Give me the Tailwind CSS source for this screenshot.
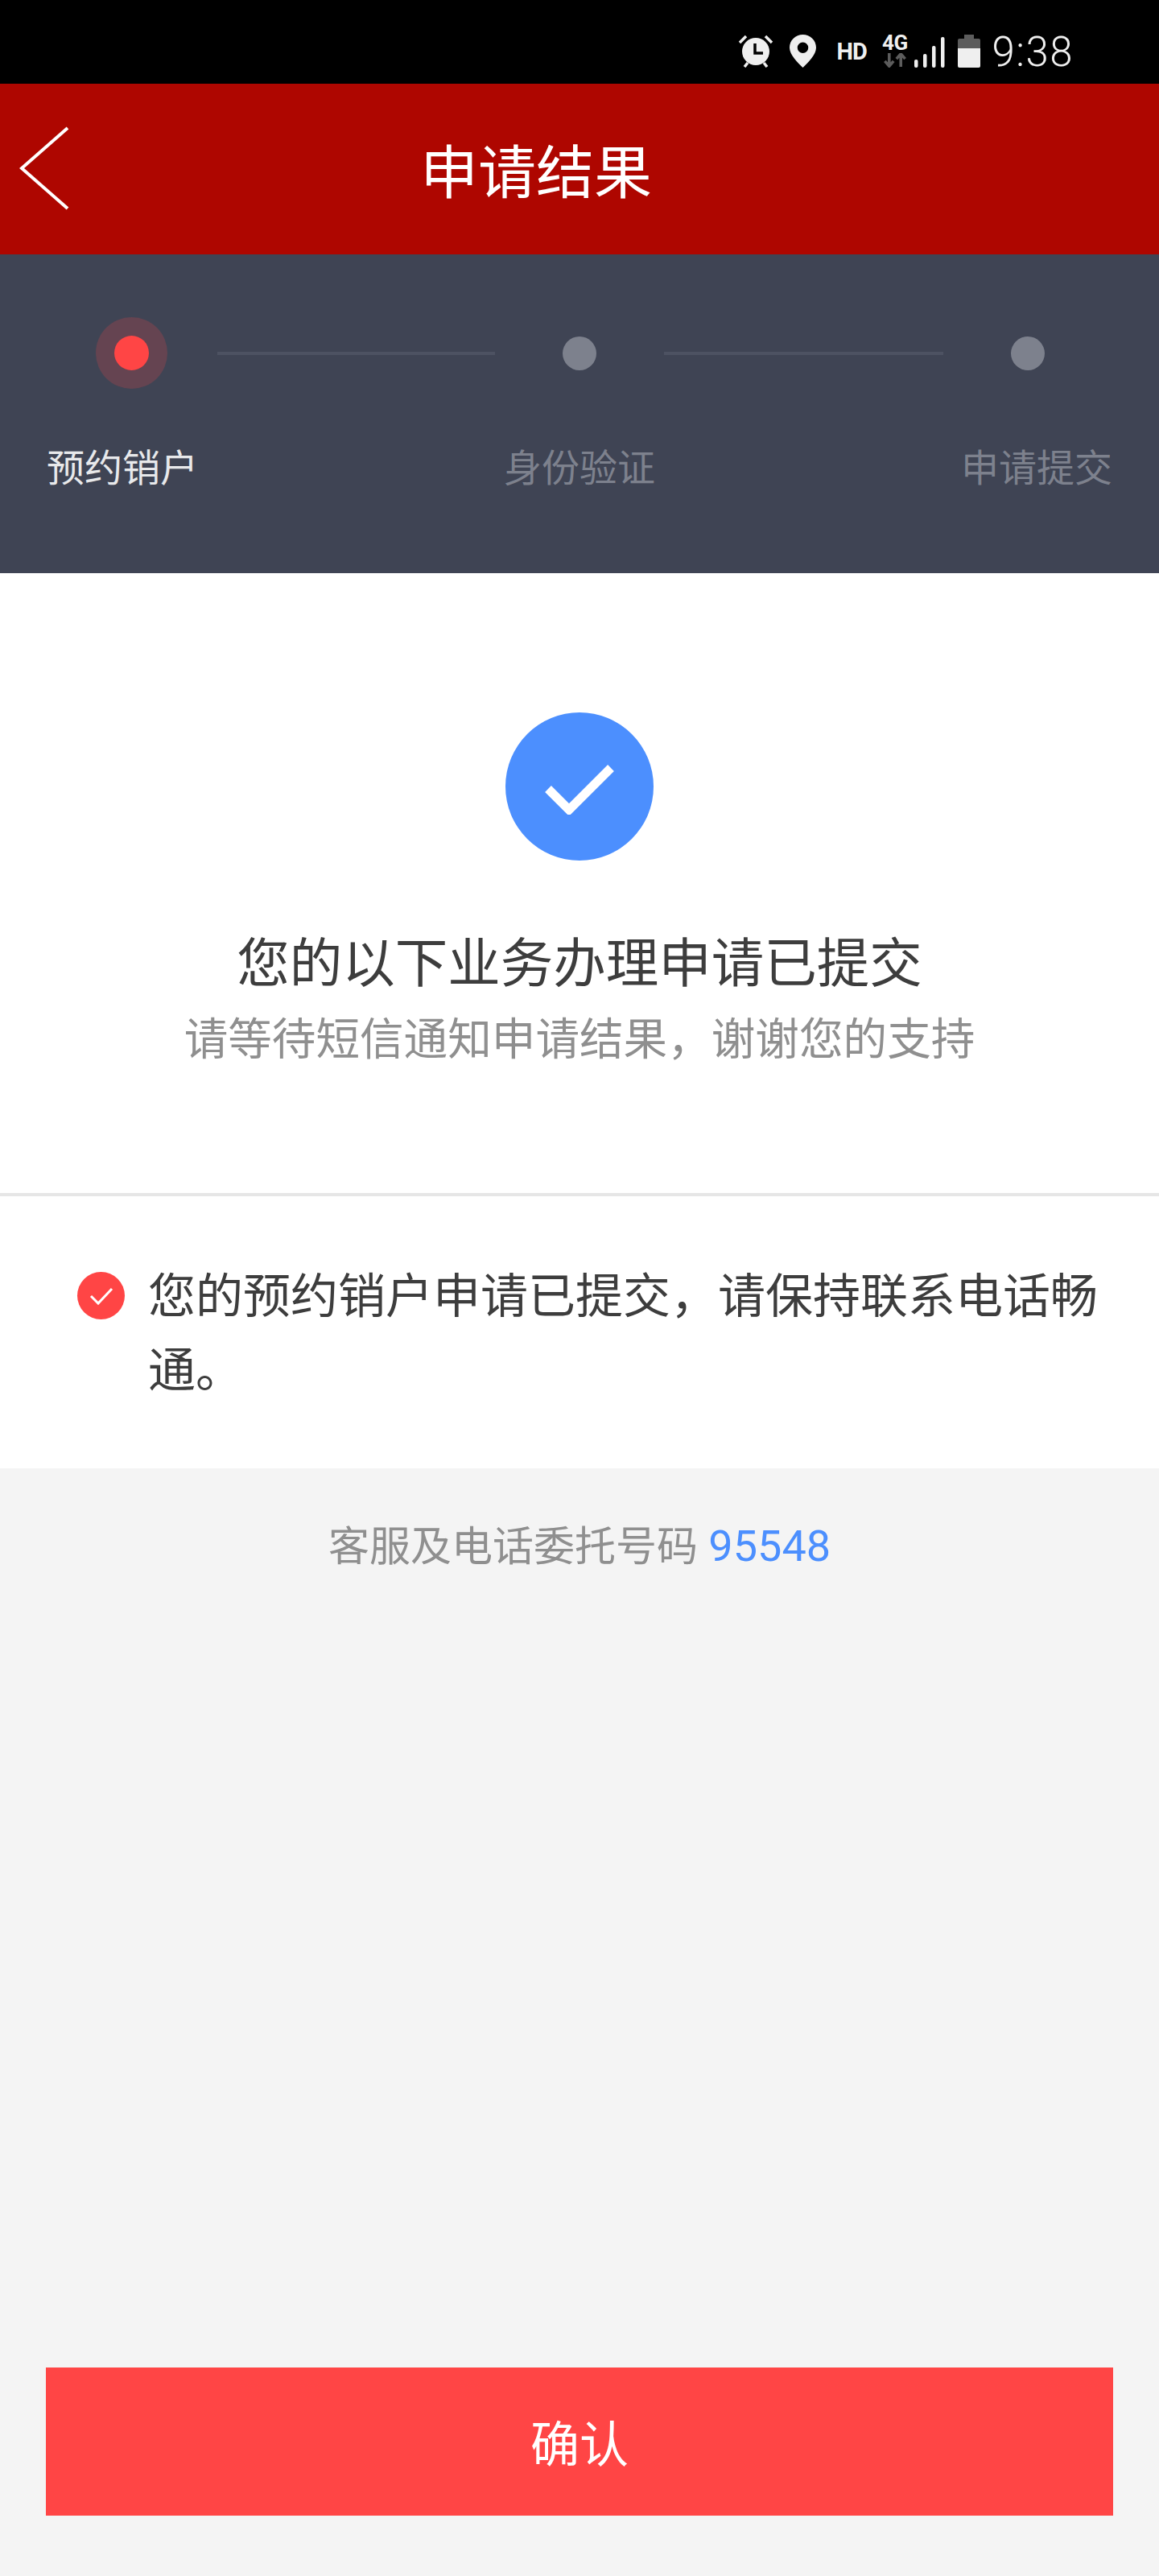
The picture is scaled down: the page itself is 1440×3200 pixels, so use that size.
<!DOCTYPE html>
<html lang="zh-CN">
<head>
  <meta charset="UTF-8" />
  <meta name="viewport" content="width=device-width, initial-scale=1.0" />
  <title>申请结果</title>
  <script src="https://cdn.jsdelivr.net/npm/@tailwindcss/browser@4"></script>
</head>
<body class="font-['Noto_Sans_CJK_SC',sans-serif]">
  <div class="w-[1440px] h-[3200px] flex flex-col bg-[#f4f4f4] overflow-hidden">

    <!-- Status bar -->
    <div class="h-[104px] bg-black flex items-start justify-end pr-[106px] pt-[43px] text-[#efefef] font-['Roboto',sans-serif]">
      <svg class="w-[44px] h-[41px] mr-[20px]" viewBox="0 0 44 41">
        <circle cx="22" cy="21" r="17" fill="#efefef" />
        <path d="M2 10 L10 2 M42 10 L34 2 M8 40 L12 35 M36 40 L32 35" stroke="#efefef" stroke-width="3.5" fill="none" />
        <path d="M21 11 V23 H31" stroke="#000" stroke-width="3.5" fill="none" />
      </svg>
      <svg class="w-[33px] h-[41px] mr-[25px]" viewBox="0 0 33 41">
        <path fill-rule="evenodd" fill="#efefef" d="M16.5 0 C7.4 0 0 7.2 0 16.2 C0 25 10 34.5 16.5 41 C23 34.5 33 25 33 16.2 C33 7.2 25.6 0 16.5 0 Z M16.5 9.5 A6.7 6.7 0 1 1 16.5 23 A6.7 6.7 0 1 1 16.5 9.5 Z" />
      </svg>
      <span class="w-[36px] mt-[5px] mr-[21px] text-[29px] leading-[32px] font-bold tracking-[-1px]">HD</span>
      <div class="w-[31px] h-[41px] mr-[9px] flex flex-col items-center">
        <span class="text-[26px] leading-[20px] font-bold tracking-[-0.5px]">4G</span>
        <svg class="w-[30px] h-[20px] mt-[3px]" viewBox="0 0 30 20">
          <path d="M7 0 V17 M1 11 L7 18 L13 11 M23 19 V2 M17 8 L23 1 L29 8" stroke="#5c5c5c" stroke-width="4" fill="none" />
        </svg>
      </div>
      <svg class="w-[38px] h-[38px] mt-[3px] mr-[16px]" viewBox="0 0 38 38">
        <rect x="0" y="28" width="4.5" height="10" rx="2" fill="#efefef" />
        <rect x="11" y="21" width="4.5" height="17" rx="2" fill="#efefef" />
        <rect x="22" y="11" width="4.5" height="27" rx="2" fill="#efefef" />
        <rect x="33" y="0" width="4.5" height="38" rx="2" fill="#efefef" />
      </svg>
      <svg class="w-[28px] h-[41px] mr-[14px]" viewBox="0 0 28 41">
        <path d="M8 0 H20 V5 H26 A2 2 0 0 1 28 7 V17 H0 V7 A2 2 0 0 1 2 5 H8 Z" fill="#5c5c5c" />
        <path d="M0 17 H28 V39 A2 2 0 0 1 26 41 H2 A2 2 0 0 1 0 39 Z" fill="#efefef" />
      </svg>
      <span class="text-[51px] leading-[44px] font-light tracking-[1.5px]">9:38</span>
    </div>

    <!-- Header -->
    <div class="h-[212px] bg-[#ae0600] flex items-center text-white">
      <svg class="w-[62px] h-[104px] ml-[24px] mb-[2px]" viewBox="0 0 62 104">
        <path d="M60 2 L3 52 L60 102" stroke="#fff" stroke-width="4" fill="none" />
      </svg>
      <h1 class="ml-[436px] mb-[2px] text-[72px] leading-[80px]">申请结果</h1>
    </div>

    <!-- Steps -->
    <div class="h-[396px] bg-[#3f4454] pt-[78px]">
      <div class="flex items-center pl-[119px]">
        <div class="w-[89px] h-[89px] rounded-full bg-[#ff4545]/20 flex items-center justify-center">
          <div class="w-[43px] h-[43px] rounded-full bg-[#ff4545]"></div>
        </div>
        <div class="w-[345px] h-[4px] ml-[62px] bg-[#4d5262]"></div>
        <div class="w-[42px] h-[42px] ml-[84px] rounded-full bg-[#7d818d]"></div>
        <div class="w-[347px] h-[4px] ml-[84px] bg-[#4d5262]"></div>
        <div class="w-[42px] h-[42px] ml-[84px] rounded-full bg-[#7d818d]"></div>
      </div>
      <div class="flex justify-between px-[58px] mt-[63px] text-[47px] leading-[64px] text-[#7d818d]">
        <span class="text-[#e8e9eb]">预约销户</span>
        <span>身份验证</span>
        <span>申请提交</span>
      </div>
    </div>

    <!-- Result -->
    <div class="h-[770px] bg-white flex flex-col items-center pt-[173px]">
      <div class="w-[184px] h-[184px] rounded-full bg-[#4c8ffe] flex items-center justify-center">
        <svg class="w-[88px] h-[64px] mt-[6px]" viewBox="0 0 88 64">
          <path d="M5 32 L31 58 L83 6" stroke="#fff" stroke-width="11" fill="none" />
        </svg>
      </div>
      <h2 class="mt-[81px] text-[65.5px] leading-[84px] text-[#3d3d3d]">您的以下业务办理申请已提交</h2>
      <p class="mt-[13px] text-[54.6px] leading-[80px] text-[#8f8f8f]">请等待短信通知申请结果，谢谢您的支持</p>
    </div>

    <!-- Notice -->
    <div class="h-[342px] bg-white border-t-4 border-[#e6e6e6] flex items-start pl-[96px] pt-[74px]">
      <div class="w-[59px] h-[59px] mt-[20px] rounded-full bg-[#ff4545] flex items-center justify-center">
        <svg class="w-[30px] h-[24px]" viewBox="0 0 30 24">
          <path d="M2 12 L11 21 L28 3" stroke="#fff" stroke-width="3" fill="none" />
        </svg>
      </div>
      <p class="w-[1190px] ml-[29px] text-[59px] leading-[92px] text-[#3d3d3d]">您的预约销户申请已提交，请保持联系电话畅通。</p>
    </div>

    <!-- Footer -->
    <p class="mt-[57px] text-center text-[51px] leading-[72px] text-[#8f8f8f]">客服及电话委托号码 <span class="ml-[2px] text-[54px] text-[#4c8ffe] font-['Roboto',sans-serif]">95548</span></p>

    <div class="flex-1"></div>

    <!-- Confirm button -->
    <button class="h-[184px] mx-[57px] mb-[75px] bg-[#ff4545] text-white text-[61px] leading-[80px]">确认</button>
  </div>
</body>
</html>
